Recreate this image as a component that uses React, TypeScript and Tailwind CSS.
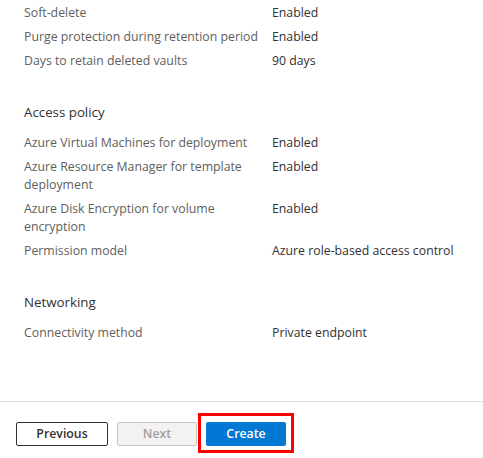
import React from 'react';

type Row = { label: string; value: string };

const sections: { title?: string; rows: Row[] }[] = [
  {
    rows: [
      { label: 'Soft-delete', value: 'Enabled' },
      { label: 'Purge protection during retention period', value: 'Enabled' },
      { label: 'Days to retain deleted vaults', value: '90 days' },
    ],
  },
  {
    title: 'Access policy',
    rows: [
      { label: 'Azure Virtual Machines for deployment', value: 'Enabled' },
      { label: 'Azure Resource Manager for template deployment', value: 'Enabled' },
      { label: 'Azure Disk Encryption for volume encryption', value: 'Enabled' },
      { label: 'Permission model', value: 'Azure role-based access control' },
    ],
  },
  {
    title: 'Networking',
    rows: [{ label: 'Connectivity method', value: 'Private endpoint' }],
  },
];

const Section: React.FC<{ title?: string; rows: Row[] }> = ({ title, rows }) => (
  <div>
    {title && <h3 className="text-[13.3px] leading-[20px] text-[#323130] mb-3">{title}</h3>}
    <div className="flex flex-col gap-[6px]">
      {rows.map((r) => (
        <div key={r.label} className="grid grid-cols-[248px_1fr] text-[12.3px] leading-[18px]">
          <div className="text-[#605e5c] pr-2">{r.label}</div>
          <div className="text-[#323130]">{r.value}</div>
        </div>
      ))}
    </div>
  </div>
);

export default function App() {
  return (
    <div
      className="w-[483px] h-[458px] bg-white flex flex-col overflow-hidden"
      style={{ fontFamily: '"Segoe UI", "Open Sans", sans-serif' }}
    >
      <div className="flex-1 pl-6 pt-1 flex flex-col gap-8">
        {sections.map((s, i) => (
          <Section key={i} title={s.title} rows={s.rows} />
        ))}
      </div>
      <div className="border-t border-[#e1dfdd] h-[57px] pl-4 pt-5 flex gap-[9px] items-start">
        <button className="w-[92px] h-6 border border-[#323130] rounded-[2px] text-[12.3px] font-semibold text-[#323130] leading-none">
          Previous
        </button>
        <button className="w-[80px] h-6 border border-[#c8c6c4] bg-[#f3f2f1] rounded-[2px] text-[12.3px] font-semibold text-[#a19f9d] leading-none">
          Next
        </button>
        <div className="relative">
          <button className="block w-[80px] h-6 bg-[#0078d4] rounded-[2px] text-[12.3px] font-semibold text-white leading-none">
            Create
          </button>
          <span className="absolute -left-2 -right-2 top-[-9px] bottom-[-7px] border-[3px] border-[#ff0000] pointer-events-none" />
        </div>
      </div>
    </div>
  );
}
